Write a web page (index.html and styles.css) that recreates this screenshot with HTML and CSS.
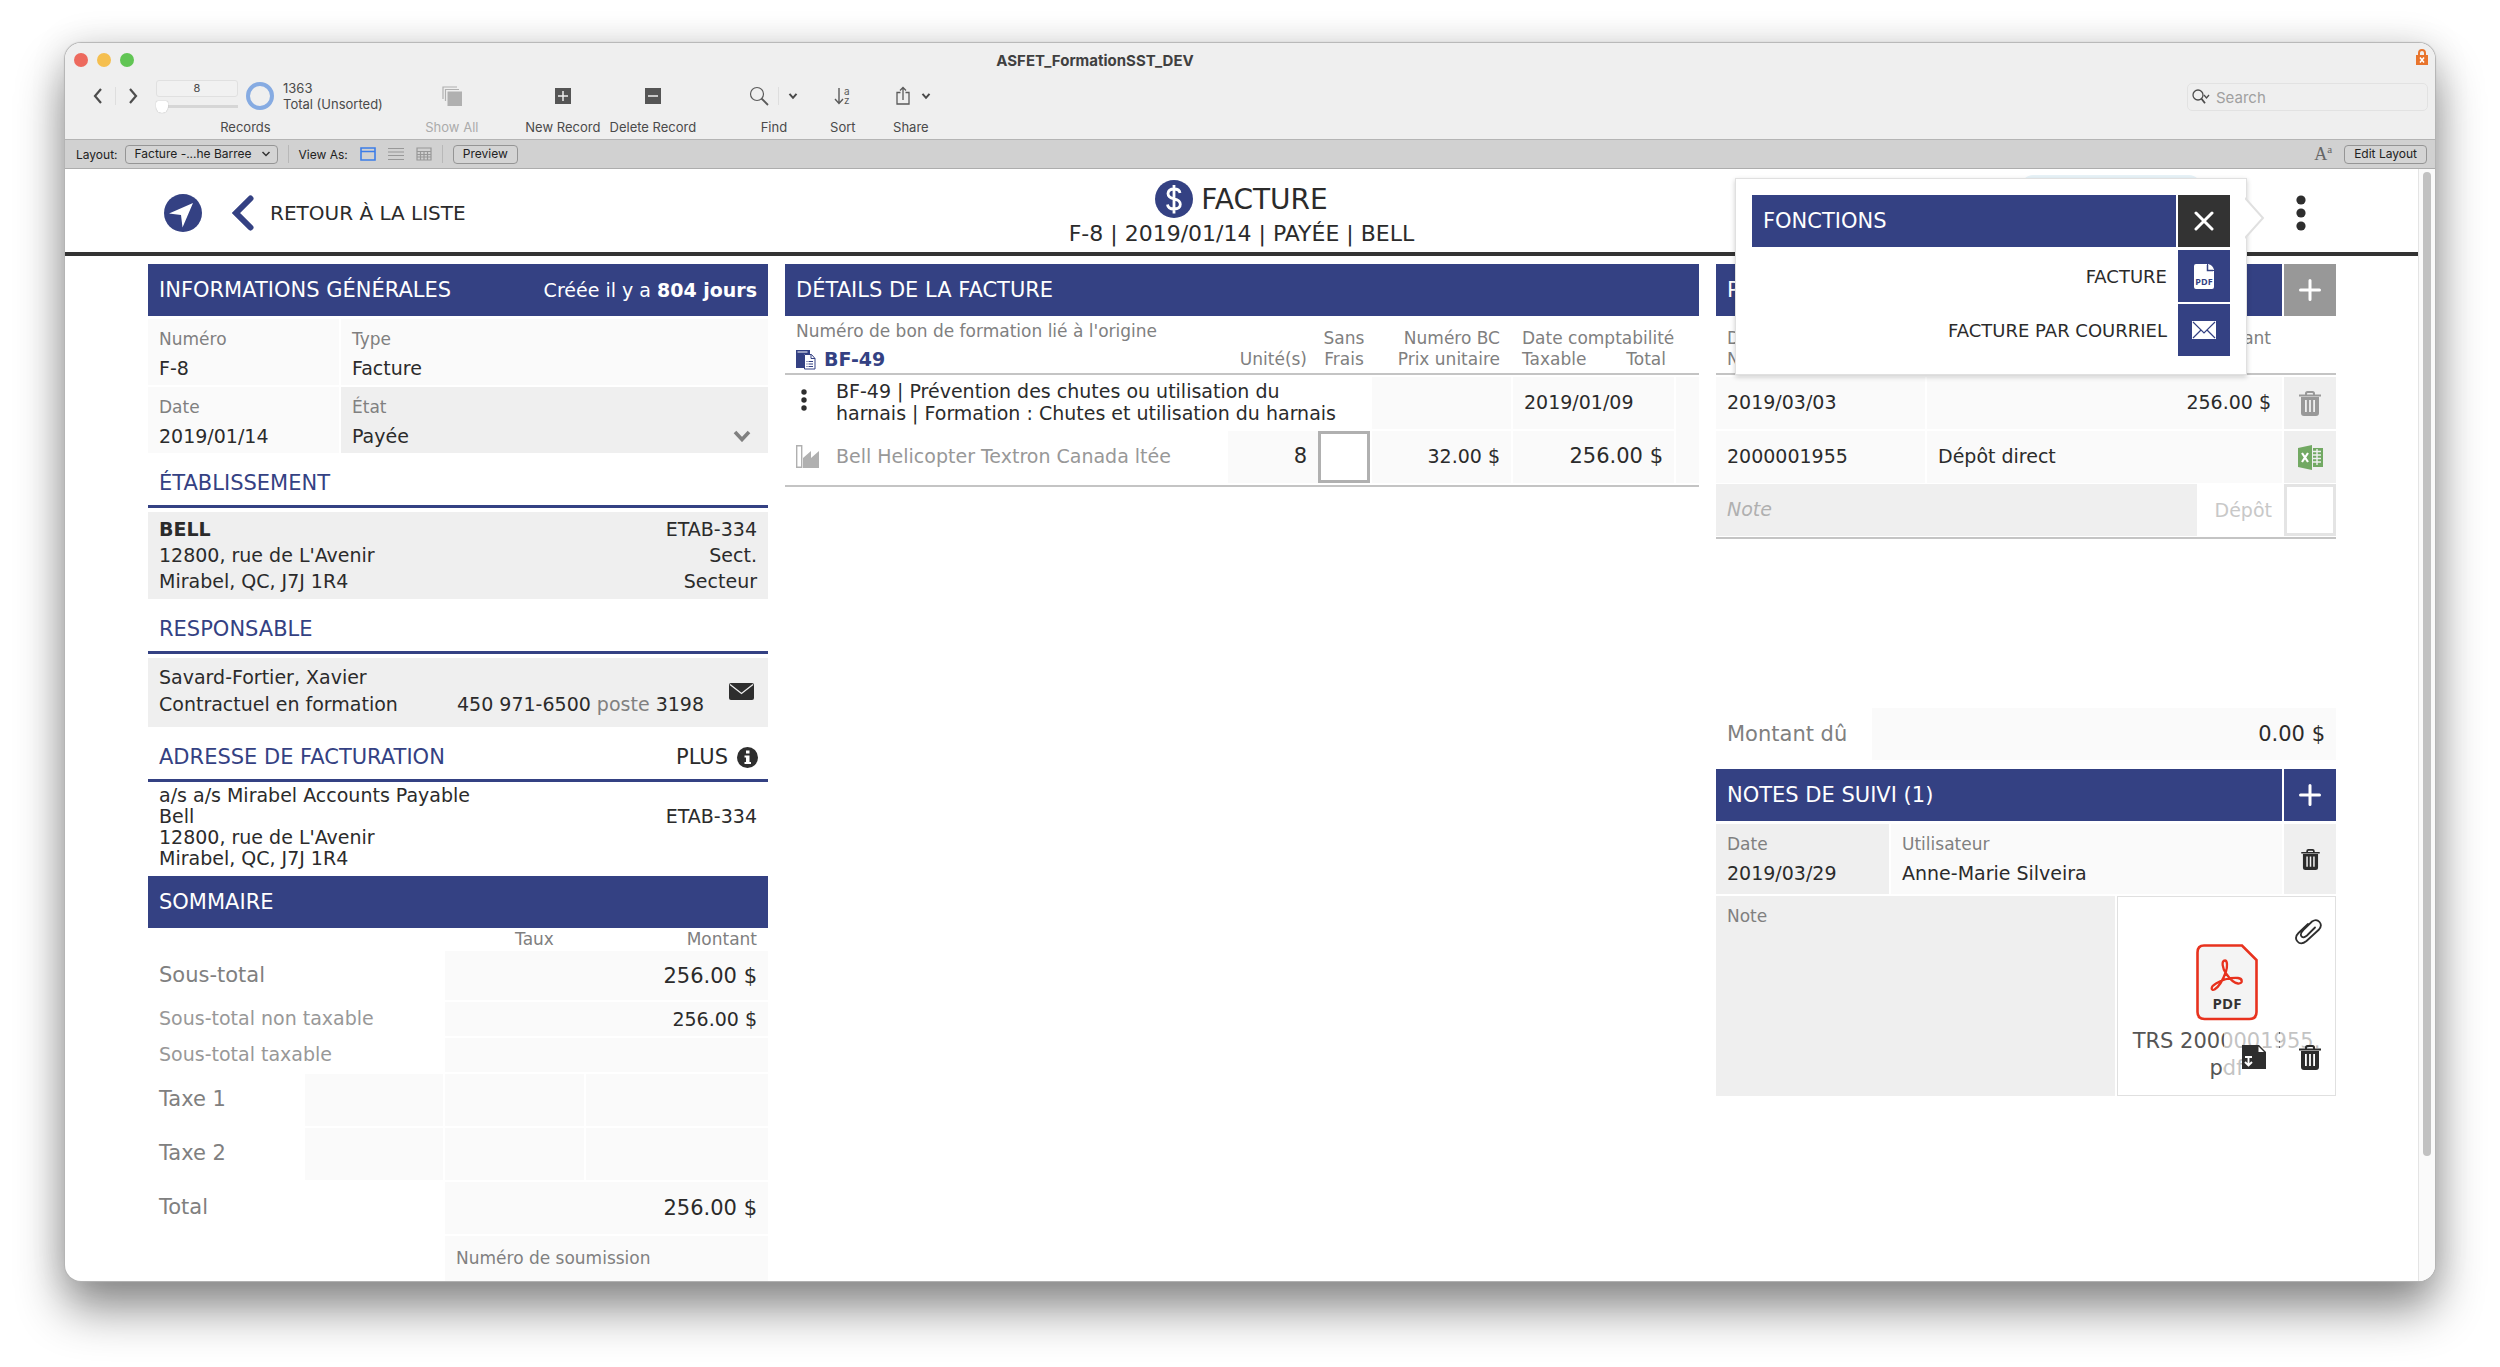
FILE: index.html
```html
<!DOCTYPE html>
<html lang="fr">

<head>
  <meta charset="utf-8">
  <meta name="viewport" content="width=device-width, initial-scale=1.0">
  <title>ASFET_FormationSST_DEV</title>
  <link rel="stylesheet" href="styles.css">
</head>

<body>
  <!-- shared icons -->
  <svg class="icon-defs" aria-hidden="true">
    <symbol id="icon-trash" viewBox="0 0 22 25">
      <path d="M0 3.500h22v2H0zM6 4V2.500Q6 0 8.500 0h5Q16 0 16 2.500V4h-2V2.800q0-.8-.8-.8H8.800Q8 2 8 2.800V4z" fill="currentColor"/>
      <path fill-rule="evenodd" d="M2 6h18v16q0 3-3 3H5q-3 0-3-3zM6 9v12h1.800V9zM10.100 9v12h1.800V9zM14.200 9v12H16V9z" fill="currentColor"/>
    </symbol>
    <symbol id="icon-plus" viewBox="0 0 22 22">
      <path d="M11 1.500v19M1.500 11h19" stroke="currentColor" stroke-width="3" stroke-linecap="round"/>
    </symbol>
    <symbol id="icon-down" viewBox="0 0 10 8">
      <path d="M1.500 1.800 5 5.800l3.500-4" fill="none" stroke="currentColor" stroke-width="2"/>
    </symbol>
  </svg>

  <div class="window">
    <div class="titlebar">
      <div class="lights">
        <span class="light red"></span>
        <span class="light yellow"></span>
        <span class="light green"></span>
      </div>
      <div class="window-title">ASFET_FormationSST_DEV</div>
      <svg class="lock" width="12" height="16" viewBox="0 0 12 16">
        <path d="M3 7V4q0-3 3-3t3 3v3" fill="none" stroke="#e8742c" stroke-width="2"/>
        <path d="M0 6h12v10H0z" fill="#e8742c"/>
        <path d="m4 8.500 4 5m0-5-4 5" stroke="#fff" stroke-width="1.500"/>
      </svg>
    </div>

    <div class="toolbar">
      <div class="tool records">
        <div class="tool-row">
          <button class="flat nav" aria-label="Previous record"><svg width="10" height="16" viewBox="0 0 10 16"><path d="M8 1 2 8l6 7" fill="none" stroke="#4d4d4d" stroke-width="2.200"/></svg></button>
          <span class="tool-sep"></span>
          <button class="flat nav" aria-label="Next record"><svg width="10" height="16" viewBox="0 0 10 16"><path d="m2 1 6 7-6 7" fill="none" stroke="#4d4d4d" stroke-width="2.200"/></svg></button>
          <div class="record-pick">
            <input class="record-number" type="text" value="8" aria-label="Record number">
            <input class="record-slider" type="range" min="1" max="1363" value="8" aria-label="Record slider">
          </div>
          <svg class="ring" width="28" height="28" viewBox="0 0 28 28"><circle cx="14" cy="14" r="12" fill="none" stroke="#86abe2" stroke-width="4"/></svg>
          <div class="record-count">1363<br>Total (Unsorted)</div>
        </div>
        <span class="tool-label">Records</span>
      </div>
      <button class="flat tool show-all" disabled>
        <span class="tool-row"><svg width="20" height="20" viewBox="0 0 20 20"><path d="M1 13V1h14M3.500 15V3.500H17" fill="none" stroke="#b0b0b0" stroke-width="1.200"/><path d="M5.500 5.500H20V20H5.500z" fill="#b0b0b0"/></svg></span>
        <span class="tool-label">Show All</span>
      </button>
      <button class="flat tool new-record">
        <span class="tool-row"><svg width="16" height="16" viewBox="0 0 16 16"><path d="M0 0h16v16H0z" fill="#555"/><path d="M8 3v10M3 8h10" stroke="#efefef" stroke-width="1.500"/></svg></span>
        <span class="tool-label">New Record</span>
      </button>
      <button class="flat tool delete-record">
        <span class="tool-row"><svg width="16" height="16" viewBox="0 0 16 16"><path d="M0 0h16v16H0z" fill="#555"/><path d="M3 8h10" stroke="#efefef" stroke-width="1.500"/></svg></span>
        <span class="tool-label">Delete Record</span>
      </button>
      <button class="flat tool find">
        <span class="tool-row">
          <svg width="20" height="20" viewBox="0 0 20 20"><circle cx="8" cy="8" r="6.500" fill="none" stroke="#5a5a5a" stroke-width="1.200"/><path d="m12.500 12.500 6.500 6.500" stroke="#5a5a5a" stroke-width="1.800"/></svg>
          <span class="tool-sep"></span>
          <svg class="caret" width="10" height="8"><use href="#icon-down"/></svg>
        </span>
        <span class="tool-label">Find</span>
      </button>
      <button class="flat tool sort">
        <span class="tool-row">
          <svg width="18" height="20" viewBox="0 0 18 20"><path d="M5 2v15M1 13l4 4.500L9 13" fill="none" stroke="#5a5a5a" stroke-width="1.400"/><text x="10" y="9" class="sort-letter">a</text><text x="10" y="18" class="sort-letter">z</text></svg>
        </span>
        <span class="tool-label">Sort</span>
      </button>
      <button class="flat tool share">
        <span class="tool-row">
          <svg width="14" height="20" viewBox="0 0 14 20"><path d="M4.500 6.500H1V18h12V6.500H9.500M7 14V1.500M4 4.500l3-3 3 3" fill="none" stroke="#5a5a5a" stroke-width="1.300"/></svg>
          <svg class="caret" width="10" height="8"><use href="#icon-down"/></svg>
        </span>
        <span class="tool-label">Share</span>
      </button>
      <label class="search">
        <svg width="18" height="16" viewBox="0 0 18 16"><circle cx="6" cy="6" r="5" fill="none" stroke="#4d4d4d" stroke-width="1.300"/><path d="m9.500 9.800 3.500 4.500" stroke="#4d4d4d" stroke-width="1.800"/><path d="m12 6 2.500 3L17 6" fill="none" stroke="#4d4d4d" stroke-width="1.300"/></svg>
        <input type="search" placeholder="Search" aria-label="Search">
      </label>
    </div>

    <div class="layoutbar">
      <label for="layout-select">Layout:</label>
      <select id="layout-select" class="bar-control layout-select">
        <option>Facture -...he Barree</option>
      </select>
      <span class="bar-sep"></span>
      <span>View As:</span>
      <button class="flat view" aria-label="Form view"><svg width="16" height="14" viewBox="0 0 16 14"><path d="M1 1h14v12H1zM1 4.500h14" fill="none" stroke="#3d7de8" stroke-width="1.600"/></svg></button>
      <button class="flat view" aria-label="List view"><svg width="16" height="14" viewBox="0 0 16 14"><path d="M0 1.500h16M0 5h16M0 8.500h16M0 12.500h16" stroke="#989898" stroke-width="1.200"/></svg></button>
      <button class="flat view" aria-label="Table view"><svg width="16" height="14" viewBox="0 0 16 14"><path d="M1 1h14v12H1zM1 4.500h14M1 7.500h14M1 10h14M4.500 4.500V13M8 4.500V13M11.500 4.500V13" fill="none" stroke="#989898" stroke-width="1.200"/></svg></button>
      <span class="bar-sep"></span>
      <button class="bar-control">Preview</button>
      <span class="format">A<sup>a</sup></span>
      <button class="bar-control">Edit Layout</button>
    </div>

    <div class="viewport">
      <div class="page">
        <header class="page-header">
          <div class="header-left">
            <button class="flat" aria-label="Navigation">
              <svg width="38" height="38" viewBox="0 0 38 38"><circle cx="19" cy="19" r="19" fill="#344183"/><path d="M29 9 18.500 33.500 17 21 5 19.500z" fill="#fff"/></svg>
            </button>
            <a class="back" href="#">
              <svg width="24" height="36" viewBox="0 0 24 36"><path d="M19.500 3.500 5 18l14.500 14.500" fill="none" stroke="#344183" stroke-width="6" stroke-linecap="round"/></svg>
              RETOUR À LA LISTE
            </a>
          </div>
          <div class="header-title">
            <h1>
              <svg width="38" height="38" viewBox="0 0 38 38"><circle cx="19" cy="19" r="19" fill="#344183"/><path d="M25 13q-.5-4-6-4t-6 4.500q0 4 6 5.300 6.300 1.300 6.300 5.500 0 4.700-6.300 4.700-6 0-6.500-4.500M19 5v28.500" fill="none" stroke="#fff" stroke-width="2.800"/></svg>
              FACTURE
            </h1>
            <p>F-8 | 2019/01/14 | PAYÉE | BELL</p>
          </div>
          <div class="header-menu">
            <span class="halo"></span>
            <button class="flat dots" aria-label="Fonctions">
              <svg width="10" height="36" viewBox="0 0 10 36"><circle cx="5" cy="5" r="4.600" fill="#2e2e2e"/><circle cx="5" cy="18" r="4.600" fill="#2e2e2e"/><circle cx="5" cy="31" r="4.600" fill="#2e2e2e"/></svg>
            </button>
            <div class="popover">
              <svg class="pointer" width="20" height="42" viewBox="0 0 20 42"><path d="M0 1 18 21 0 41" fill="#fff" stroke="#e0e0e0" stroke-width="2"/></svg>
              <div class="popover-head">
                <h2 class="bar">FONCTIONS</h2>
                <button class="square dark" aria-label="Fermer"><svg width="20" height="20" viewBox="0 0 20 20"><path d="m2 2 16 16m0-16L2 18" stroke="#fff" stroke-width="3" stroke-linecap="round"/></svg></button>
              </div>
              <div class="popover-row">
                <label for="fn-pdf">FACTURE</label>
                <button id="fn-pdf" class="square"><svg width="20" height="25" viewBox="0 0 20 25"><path d="M2 0h11v7h7v16q0 2-2 2H2q-2 0-2-2V2q0-2 2-2z" fill="#fff"/><path d="M14 0q5 1 6 6h-6z" fill="#fff"/><path d="M13.500 1v5.500H19" fill="none" stroke="#344183" stroke-width="1.500"/><text x="10" y="21" class="pdf-small">PDF</text></svg></button>
              </div>
              <div class="popover-row">
                <label for="fn-mail">FACTURE PAR COURRIEL</label>
                <button id="fn-mail" class="square"><svg width="24" height="18" viewBox="0 0 24 18"><path d="M0 0h24v18H0z" fill="#fff"/><path d="m1 1 11 11L23 1M1 17l8-8M23 17l-8-8" fill="none" stroke="#344183" stroke-width="1.200"/></svg></button>
              </div>
            </div>
          </div>
        </header>

        <main class="columns">
          <section class="col-info">
            <div class="bar">
              <h2>INFORMATIONS GÉNÉRALES</h2>
              <span>Créée il y a <b>804 jours</b></span>
            </div>
            <div class="fields info-fields">
              <div class="field"><span class="label">Numéro</span><span>F-8</span></div>
              <div class="field"><span class="label">Type</span><span>Facture</span></div>
              <div class="field"><span class="label">Date</span><span>2019/01/14</span></div>
              <div class="field editable">
                <label class="label" for="etat">État</label>
                <select id="etat" class="etat"><option>Payée</option></select>
                <svg class="etat-arrow" width="18" height="12" viewBox="0 0 18 12"><path d="m2 2 7 7.500L16 2" fill="none" stroke="#808080" stroke-width="3.600"/></svg>
              </div>
            </div>

            <h3 class="section-title">ÉTABLISSEMENT</h3>
            <div class="box company">
              <div><b>BELL</b><br>12800, rue de L'Avenir<br>Mirabel, QC, J7J 1R4</div>
              <div class="right">ETAB-334<br>Sect.<br>Secteur</div>
            </div>

            <h3 class="section-title">RESPONSABLE</h3>
            <div class="box contact">
              <div>Savard-Fortier, Xavier<br>Contractuel en formation</div>
              <div class="phone">450 971-6500 <span class="label-text">poste</span> 3198</div>
              <button class="flat" aria-label="Courriel"><svg width="25" height="17" viewBox="0 0 25 17"><rect width="25" height="17" rx="2" fill="#2e2e2e"/><path d="m1 1.500 11.500 9L24 1.500" fill="none" stroke="#efefef" stroke-width="1.300"/></svg></button>
            </div>

            <div class="section-title">
              <h3>ADRESSE DE FACTURATION</h3>
              <button class="flat plus-info">PLUS
                <svg width="21" height="21" viewBox="0 0 21 21"><circle cx="10.500" cy="10.500" r="10.500" fill="#2e2e2e"/><path d="M9 3.500h3.500v3H9zM7.500 8.500h5V15H14v2H7.500v-2H9v-4.500H7.500z" fill="#fff"/></svg>
              </button>
            </div>
            <div class="address">
              <div>a/s a/s Mirabel Accounts Payable<br>Bell<br>12800, rue de L'Avenir<br>Mirabel, QC, J7J 1R4</div>
              <div class="right"><br>ETAB-334</div>
            </div>

            <div class="bar"><h2>SOMMAIRE</h2></div>
            <table class="summary">
              <thead>
                <tr><th class="c-label"></th><th class="c-tax"></th><th class="c-rate">Taux</th><th class="right">Montant</th></tr>
              </thead>
              <tbody>
                <tr><th colspan="2" class="large">Sous-total</th><td colspan="2" class="large">256.00 $</td></tr>
                <tr class="small"><th colspan="2">Sous-total non taxable</th><td colspan="2">256.00 $</td></tr>
                <tr class="small"><th colspan="2">Sous-total taxable</th><td colspan="2"></td></tr>
                <tr class="tall"><th class="large">Taxe 1</th><td></td><td></td><td></td></tr>
                <tr class="tall"><th class="large">Taxe 2</th><td></td><td></td><td></td></tr>
                <tr class="tall"><th colspan="2" class="large">Total</th><td colspan="2" class="large">256.00 $</td></tr>
                <tr class="tall"><th colspan="2"></th><td colspan="2" class="quote">Numéro de soumission</td></tr>
              </tbody>
            </table>
          </section>

          <section class="col-details">
            <div class="bar"><h2>DÉTAILS DE LA FACTURE</h2></div>
            <table class="portal details">
              <colgroup>
                <col class="c-icon">
                <col>
                <col class="c-units">
                <col class="c-free">
                <col class="c-price">
                <col class="c-total">
                <col class="c-end">
              </colgroup>
              <thead>
                <tr>
                  <th colspan="2" class="origin">
                    Numéro de bon de formation lié à l'origine
                    <a href="#">
                      <svg width="20" height="20" viewBox="0 0 20 20"><path d="M0 0h14v4H8v14H0z" fill="#344183"/><path d="M1.500 2h10" stroke="#fff"/><path d="M8.500 4.500h7l3.500 4v10.500H8.500zM15 4.500v4h4" fill="#fff" stroke="#344183"/><path d="M10.500 11.500h1m1 0h4.500m-6.500 2.500h1m1 0h4.500m-6.500 2.500h1m1 0h4.500" stroke="#344183"/></svg>
                      BF-49
                    </a>
                  </th>
                  <th class="right">Unité(s)</th>
                  <th class="free center">Sans<br>Frais</th>
                  <th class="right">Numéro BC<br>Prix unitaire</th>
                  <th colspan="2">Date comptabilité<br><span class="split"><span>Taxable</span><span>Total</span></span></th>
                </tr>
              </thead>
              <tbody>
                <tr>
                  <td class="icon-cell"><button class="flat options" aria-label="Options"><svg width="6" height="22" viewBox="0 0 6 22"><circle cx="3" cy="3" r="2.700" fill="#2e2e2e"/><circle cx="3" cy="11" r="2.700" fill="#2e2e2e"/><circle cx="3" cy="19" r="2.700" fill="#2e2e2e"/></svg></button></td>
                  <td colspan="3" class="description">BF-49 | Prévention des chutes ou utilisation du<br>harnais | Formation : Chutes et utilisation du harnais</td>
                  <td class="fill"></td>
                  <td class="fill">2019/01/09</td>
                  <td class="fill" rowspan="2"></td>
                </tr>
                <tr>
                  <td class="icon-cell"><svg width="23" height="23" viewBox="0 0 23 23"><path d="M.7.700h5v21.500h-5z" fill="none" stroke="#b0b0b0" stroke-width="1.400"/><path d="M7 23V13l8-7v7l8-7v17z" fill="#b0b0b0"/></svg></td>
                  <td class="client">Bell Helicopter Textron Canada ltée</td>
                  <td class="fill right large">8</td>
                  <td class="check-cell"><input type="checkbox" class="check" aria-label="Sans frais"></td>
                  <td class="fill right">32.00 $</td>
                  <td class="fill right large">256.00 $</td>
                </tr>
              </tbody>
            </table>
          </section>

          <section class="col-payments">
            <div class="bar-row">
              <h2 class="bar">PAIEMENTS</h2>
              <button class="square grey" aria-label="Ajouter un paiement"><svg width="22" height="22"><use href="#icon-plus"/></svg></button>
            </div>
            <div class="payments">
              <table class="portal">
                <thead>
                  <tr><th class="c-pay-date">Date<br>Numéro</th><th class="right">Montant<br>&nbsp;</th><th class="c-action"></th></tr>
                </thead>
                <tbody>
                  <tr>
                    <td class="fill">2019/03/03</td>
                    <td class="fill right">256.00 $</td>
                    <td class="action"><button class="flat muted" aria-label="Supprimer le paiement"><svg width="22" height="25"><use href="#icon-trash"/></svg></button></td>
                  </tr>
                  <tr>
                    <td class="fill">2000001955</td>
                    <td class="fill">Dépôt direct</td>
                    <td class="action"><button class="flat" aria-label="Exporter vers Excel"><svg width="25" height="25" viewBox="0 0 25 25"><path d="m0 3 14-3v25L0 22z" fill="#72a963"/><path d="M15 3h10v19H15z" fill="#72a963"/><path d="M15 6.500h8M15 10h8m-8 3.500h8M15 17h8M19 4v16" stroke="#efefef" stroke-width="1.400"/><path d="m4 8 6 9m0-9-6 9" stroke="#fff" stroke-width="2.200"/></svg></button></td>
                  </tr>
                </tbody>
              </table>
              <div class="deposit">
                <input class="note-input" type="text" placeholder="Note" aria-label="Note">
                <label for="depot">Dépôt</label>
                <input id="depot" type="checkbox" class="check light-check">
              </div>
            </div>
            <div class="due">
              <span>Montant dû</span>
              <output>0.00 $</output>
            </div>

            <div class="bar-row">
              <h2 class="bar">NOTES DE SUIVI (1)</h2>
              <button class="square" aria-label="Ajouter une note"><svg width="22" height="22"><use href="#icon-plus"/></svg></button>
            </div>
            <div class="fields note-fields">
              <div class="field editable"><label class="label" for="note-date">Date</label><input id="note-date" type="text" value="2019/03/29"></div>
              <div class="field"><span class="label">Utilisateur</span><span>Anne-Marie Silveira</span></div>
              <div class="action"><button class="flat" aria-label="Supprimer la note"><svg width="19" height="21"><use href="#icon-trash"/></svg></button></div>
            </div>
            <div class="note-body">
              <div class="field editable"><label class="label" for="note-text">Note</label><textarea id="note-text"></textarea></div>
              <div class="attachment">
                <svg class="pdf-icon" width="62" height="77" viewBox="0 0 62 77">
                  <path d="M8 1.500h38L60.500 16v52q0 7-7 7H8.500q-7 0-7-7V8.500q0-7 6.500-7z" fill="#f4f4f4" stroke="#e8321e" stroke-width="2.600"/>
                  <path d="M29 16.500c-4 0-2.500 8 1 13s7 9.500 12 10 5-5 0-5.500c-8-.5-17 2.500-22 5.500-6 3.500-5 7.500-1.500 6 5-3 9-11 11.500-18 1.500-5 1.500-11-1-11z" fill="none" stroke="#e8321e" stroke-width="2.300"/>
                  <text x="31" y="65" class="pdf-text">PDF</text>
                </svg>
                <span class="file-name">TRS 2000001955.<wbr>pdf</span>
                <button class="flat clip" aria-label="Joindre un fichier"><svg width="28" height="26" viewBox="0 0 28 26"><path d="M14 5 4.500 14Q0 18.500 3.500 22.500t9-.5L25 10.500Q28.500 6.500 25.500 3T18 2.500L9.500 10.800Q5.500 15 7.500 17.300t5.500-.8L21 8.500" fill="none" stroke="#2e2e2e" stroke-width="1.800" stroke-linecap="round"/></svg></button>
                <div class="file-actions">
                  <button class="flat" aria-label="Télécharger"><svg width="24" height="24" viewBox="0 0 24 24"><path d="M0 0h17l7 7v17H0z" fill="#2e2e2e"/><path d="M16.500 1.500V7H22z" fill="#fff"/><path d="M3 12h7M6.500 12v8M3 17l3.500 3.500L10 17" fill="none" stroke="#fff" stroke-width="1.900"/></svg></button>
                  <button class="flat" aria-label="Supprimer le fichier"><svg width="22" height="25"><use href="#icon-trash"/></svg></button>
                </div>
              </div>
            </div>
          </section>
        </main>
      </div>
      <div class="scrollbar"><div class="thumb"></div></div>
    </div>
  </div>
</body>

</html>
```
FILE: styles.css
```css
* {
  box-sizing: border-box;
}

body {
  margin: 0;
  height: 100vh;
  padding: 43px 65px 86px;
  background-color: white;
  font-family: Verdana, "DejaVu Sans", sans-serif;
  font-size: 19px;
  color: #2b2b2b;
  overflow: hidden;
}

h1, h2, h3, p {
  margin: 0;
  font-weight: normal;
}

svg {
  display: block;
  flex: none;
}

input, select, textarea, button {
  font: inherit;
  color: inherit;
}

.icon-defs {
  position: absolute;
  width: 0;
  height: 0;
}

.flat {
  border: none;
  background: none;
  padding: 0;
  cursor: pointer;
}

.right {
  text-align: right;
}

.center {
  text-align: center;
}

/* window */

.window {
  height: 100%;
  display: flex;
  flex-direction: column;
  border-radius: 16px;
  overflow: hidden;
  background-color: white;
  box-shadow: 0 0 1px 1px #b4b4b4, 0 28px 48px rgba(0, 0, 0, 0.45), 0 0 36px rgba(0, 0, 0, 0.12);
}

.titlebar {
  display: flex;
  align-items: center;
  height: 34px;
  padding: 0 7px 0 9px;
  background-color: #efefef;
  font-family: Inter, sans-serif;
}

.lights {
  display: flex;
  gap: 9px;
}

.light {
  width: 14px;
  height: 14px;
  border-radius: 50%;
}

.red {
  background-color: #ed6a5e;
}

.yellow {
  background-color: #f5bf4f;
}

.green {
  background-color: #61c554;
}

.window-title {
  flex: 1;
  padding-right: 360px;
  text-align: center;
  font-size: 15px;
  font-weight: bold;
  color: #404040;
}

.lock {
  margin-bottom: 6px;
}

.toolbar {
  display: flex;
  height: 63px;
  padding: 0 7px 0 25px;
  background-color: #efefef;
  border-bottom: 1px solid #b4b4b4;
  font-family: Inter, sans-serif;
  font-size: 13px;
  color: #4a4a4a;
}

.tool {
  display: flex;
  flex-direction: column;
  align-items: center;
}

.tool-row {
  display: flex;
  align-items: center;
  height: 39px;
}

.tool-label {
  line-height: 24px;
  white-space: nowrap;
}

.records .tool-label {
  padding-left: 18px;
}

.nav {
  padding: 0 3px;
}

.tool-sep {
  width: 1px;
  height: 18px;
  margin: 0 9px;
  background-color: #dedede;
}

.record-pick {
  display: flex;
  flex-direction: column;
  gap: 4px;
  width: 82px;
  margin: 0 8px 0 15px;
}

.record-number {
  width: 100%;
  height: 17px;
  padding: 0;
  border: 1px solid #e0e0e0;
  border-radius: 3px;
  background: #f1f1f1;
  text-align: center;
  font-size: 11px;
}

.record-slider {
  appearance: none;
  width: 100%;
  height: 12px;
  margin: 0;
  background: linear-gradient(#d6d6d6, #d6d6d6) center / 100% 3px no-repeat;
}

.record-slider::-webkit-slider-thumb {
  appearance: none;
  width: 12px;
  height: 12px;
  border-radius: 2px 2px 6px 6px;
  background-color: white;
  box-shadow: 0 0 1px #999;
}

.record-count {
  margin-left: 9px;
  line-height: 16px;
  white-space: nowrap;
}

.show-all {
  width: 54px;
  margin-left: 42px;
  color: #ababab;
}

.new-record {
  width: 76px;
  margin-left: 46px;
}

.delete-record {
  width: 88px;
  margin-left: 8px;
}

.find {
  width: 50px;
  margin-left: 52px;
}

.sort {
  width: 30px;
  margin-left: 29px;
}

.share {
  width: 40px;
  margin-left: 33px;
}

.share .tool-row {
  gap: 11px;
  padding-left: 6px;
}

.sort-letter {
  font-family: Inter, sans-serif;
  font-size: 10px;
  fill: #5a5a5a;
}

.search {
  display: flex;
  align-items: center;
  gap: 6px;
  width: 241px;
  height: 28px;
  margin: 6px 0 0 auto;
  padding: 0 4px;
  border: 1px solid #e2e2e2;
  border-radius: 5px;
}

.search input {
  flex: 1;
  min-width: 0;
  border: none;
  background: none;
  padding: 0;
  font-size: 15px;
}

.search input::placeholder {
  color: #a0a0a0;
}

.layoutbar {
  display: flex;
  align-items: center;
  height: 29px;
  padding: 0 8px 0 11px;
  background-color: #d1d1d1;
  border-bottom: 1px solid #adadad;
  font-family: Inter, sans-serif;
  font-size: 12px;
  color: #222;
}

.bar-control {
  height: 19px;
  padding: 0 9px;
  border: 1px solid #959595;
  border-radius: 4px;
  background-color: #d4d4d4;
  line-height: 16px;
}

.layout-select {
  appearance: none;
  width: 153px;
  margin-left: 7px;
  background: #d4d4d4 url("data:image/svg+xml,%3Csvg xmlns='http://www.w3.org/2000/svg' width='10' height='8'%3E%3Cpath d='M1.500 2 5 5.500 8.500 2' fill='none' stroke='%23333' stroke-width='1.500'/%3E%3C/svg%3E") no-repeat right 6px center;
}

.bar-sep {
  width: 1px;
  height: 18px;
  margin: 0 10px;
  background-color: #b8b8b8;
}

.view {
  margin-left: 12px;
}

.format {
  margin: 0 12px 0 auto;
  font-family: "Liberation Serif", serif;
  font-size: 18px;
  color: #666;
}

.format sup {
  font-size: 11px;
  line-height: 0;
}

/* page */

.viewport {
  flex: 1;
  min-height: 0;
  display: flex;
}

.page {
  flex: 1;
  min-width: 0;
  overflow: hidden;
}

.scrollbar {
  width: 17px;
  padding: 3px 4px;
  border-left: 1px solid #e4e4e4;
  background-color: #fafafa;
}

.thumb {
  height: 89%;
  border-radius: 4px;
  background-color: #c1c1c1;
}

.page-header {
  display: grid;
  grid-template-columns: 1fr auto 1fr;
  height: 87px;
  padding: 0 99px;
  border-bottom: 4px solid #333;
  font-size: 20px;
}

.header-left {
  display: flex;
  align-items: center;
  gap: 29px;
  padding-top: 4px;
}

.back {
  display: flex;
  align-items: center;
  gap: 15px;
  color: inherit;
  text-decoration: none;
}

.header-title {
  padding-top: 10px;
  text-align: center;
}

.header-title h1 {
  display: flex;
  align-items: center;
  justify-content: center;
  gap: 8px;
  height: 40px;
  font-size: 28px;
}

.header-title p {
  font-size: 22px;
  line-height: 30px;
}

.header-menu {
  position: relative;
  display: flex;
  align-items: center;
  justify-content: flex-end;
  padding: 4px 13px 0 0;
}

.halo {
  position: absolute;
  top: 6px;
  right: 118px;
  width: 180px;
  height: 24px;
  border-radius: 24px;
  background-color: #e8f3f8;
}

.popover {
  position: absolute;
  z-index: 2;
  top: 9px;
  right: 72px;
  width: 512px;
  padding: 16px;
  background-color: white;
  border: 1px solid #e0e0e0;
  box-shadow: 0 2px 5px rgba(0, 0, 0, 0.2);
}

.pointer {
  position: absolute;
  top: 18px;
  right: -19px;
}

.popover-head,
.bar-row {
  display: flex;
  gap: 2px;
}

.popover-head {
  margin-bottom: 3px;
}

.popover-head .bar,
.bar-row .bar {
  flex: 1;
}

.popover-row {
  display: flex;
  align-items: center;
  justify-content: flex-end;
  gap: 11px;
  margin-bottom: 2px;
  font-size: 18px;
}

.bar {
  display: flex;
  align-items: center;
  justify-content: space-between;
  height: 52px;
  padding: 0 11px;
  background-color: #344183;
  color: white;
  font-size: 21px;
}

.bar h2 {
  font-size: 21px;
}

.bar span {
  font-size: 19px;
}

.square {
  display: flex;
  align-items: center;
  justify-content: center;
  width: 52px;
  height: 52px;
  padding: 0;
  border: none;
  background-color: #344183;
  color: white;
}

.dark {
  background-color: #333;
}

.grey {
  background-color: #989898;
}

.pdf-small {
  font-family: "Open Sans", sans-serif;
  font-size: 9px;
  font-weight: bold;
  text-anchor: middle;
  fill: #344183;
}

.columns {
  display: grid;
  grid-template-columns: 620fr 914fr 620fr;
  gap: 17px;
  padding: 8px 82px 0 83px;
}

.fields {
  display: grid;
  gap: 2px;
  margin-top: 3px;
}

.info-fields {
  grid-template-columns: 191px 1fr;
}

.field {
  position: relative;
  display: flex;
  flex-direction: column;
  gap: 5px;
  height: 66px;
  padding: 8px 11px 0;
  background-color: #fafafa;
  line-height: 24px;
}

.editable {
  background-color: #efefef;
}

.label {
  font-size: 17px;
  color: #808080;
}

.label-text {
  color: #808080;
}

.field input,
.field textarea,
.etat {
  width: 100%;
  height: 24px;
  padding: 0;
  border: none;
  background: none;
  appearance: none;
  resize: none;
}

.etat-arrow {
  position: absolute;
  right: 17px;
  bottom: 11px;
}

.section-title {
  display: flex;
  align-items: center;
  justify-content: space-between;
  height: 55px;
  padding: 8px 10px 0 11px;
  border-bottom: 3px solid #344183;
  font-size: 21px;
  color: #344183;
}

.section-title h3 {
  font-size: 21px;
}

.plus-info {
  display: flex;
  align-items: center;
  gap: 9px;
  color: #2b2b2b;
}

.box {
  display: flex;
  justify-content: space-between;
  margin-top: 4px;
  background-color: #efefef;
}

.company {
  padding: 4px 11px 5px;
  line-height: 26px;
}

.contact {
  align-items: center;
  padding: 6px 14px 9px 11px;
  line-height: 27px;
}

.phone {
  align-self: flex-end;
  margin: 0 25px 0 auto;
}

.address {
  display: flex;
  justify-content: space-between;
  padding: 3px 11px 7px;
  line-height: 21px;
}

/* tables */

table {
  width: 100%;
  table-layout: fixed;
  border-spacing: 0;
}

th {
  padding: 0 11px;
  text-align: left;
  font-weight: normal;
  color: #808080;
}

td {
  padding: 0 11px;
}

.large {
  font-size: 21px;
}

th.right {
  text-align: right;
}

th.center {
  text-align: center;
}

.summary thead th {
  height: 21px;
  font-size: 17px;
  line-height: 20px;
}

.summary .c-label {
  width: 155px;
}

.summary .c-tax {
  width: 140px;
}

.summary .c-rate {
  width: 141px;
  padding: 0 0 0 42px;
  text-align: center;
}

.summary tbody tr {
  height: 51px;
}

.summary tbody .small {
  height: 36px;
}

.summary tbody .tall {
  height: 54px;
}

.summary .small th {
  color: #989898;
}

.summary td {
  border-top: 2px solid white;
  border-left: 2px solid white;
  background-color: #fafafa;
  text-align: right;
}

.summary .quote {
  padding-top: 12px;
  vertical-align: top;
  text-align: left;
  font-size: 17px;
  color: #808080;
}

.portal thead th {
  height: 59px;
  padding-bottom: 3px;
  border-bottom: 2px solid #c4c4c4;
  vertical-align: bottom;
  font-size: 17px;
  line-height: 21px;
  white-space: nowrap;
}

.portal td {
  height: 54px;
  padding-bottom: 2px;
  border-left: 2px solid white;
  border-top: 2px solid white;
}

.portal td:first-child {
  border-left: none;
}

.fill {
  background-color: #fafafa;
}

.details {
  padding-bottom: 2px;
  border-bottom: 2px solid #c4c4c4;
}

.c-icon {
  width: 38px;
}

.c-units {
  width: 92px;
}

.c-free {
  width: 52px;
}

.c-price {
  width: 141px;
}

.c-total {
  width: 163px;
}

.c-end {
  width: 25px;
}

.origin a {
  display: flex;
  align-items: center;
  gap: 8px;
  margin-top: 7px;
  color: #344183;
  font-size: 19px;
  font-weight: bold;
  text-decoration: none;
}

.details .free {
  padding: 0 0 3px;
}

.split {
  display: flex;
  justify-content: space-between;
  padding-right: 22px;
}

.details .icon-cell {
  padding-right: 0;
}

.options {
  padding: 0 5px;
}

.description {
  line-height: 22px;
}

.description,
.client {
  white-space: nowrap;
}

.client {
  color: #989898;
}

.details .check-cell {
  padding: 0;
  border-left: none;
}

.check {
  display: block;
  appearance: none;
  width: 52px;
  height: 52px;
  margin: 0;
  border: 3px solid #b0b0b0;
  background-color: white;
}

.light-check {
  border-color: #e4e4e4;
}

.payments {
  min-height: 392px;
}

.c-pay-date {
  width: 209px;
}

.c-action {
  width: 54px;
}

.portal .action {
  padding: 0;
}

.action {
  background-color: #efefef;
}

.action .flat {
  display: flex;
  justify-content: center;
  align-items: center;
  width: 100%;
  height: 100%;
}

.muted {
  color: #989898;
}

.deposit {
  display: flex;
  align-items: center;
  height: 56px;
  border-bottom: 2px solid #c4c4c4;
  color: #c8c8c8;
}

.note-input {
  flex: 1;
  min-width: 0;
  height: 52px;
  padding: 0 11px 2px;
  border: none;
  background-color: #efefef;
}

.note-input::placeholder {
  font-style: italic;
  color: #b0b0b0;
}

.deposit label {
  padding: 0 12px 0 18px;
}

.due {
  display: flex;
  align-items: center;
  height: 52px;
  margin-bottom: 9px;
  padding-left: 11px;
  font-size: 21px;
  color: #808080;
}

.due span {
  flex: none;
  width: 145px;
}

.due output {
  flex: 1;
  padding-right: 11px;
  background-color: #fafafa;
  line-height: 52px;
  text-align: right;
  color: #2b2b2b;
}

.note-fields {
  grid-template-columns: 173px 1fr 52px;
}

.note-fields .field {
  height: 70px;
}

.note-body {
  display: grid;
  grid-template-columns: 1fr 219px;
  gap: 2px;
  margin-top: 2px;
}

.note-body .field {
  height: 200px;
}

.field textarea {
  flex: 1;
}

.attachment {
  position: relative;
  padding: 47px 12px 0;
  border: 1px solid #e0e0e0;
  text-align: center;
}

.pdf-icon {
  margin: 0 auto 7px;
}

.pdf-text {
  font-family: "Open Sans", sans-serif;
  font-size: 15px;
  font-weight: bold;
  text-anchor: middle;
  fill: #333;
}

.file-name {
  font-size: 21px;
  line-height: 27px;
  color: #555;
}

.clip {
  position: absolute;
  top: 22px;
  right: 13px;
}

/* translucent buttons lying over the file name */
.file-actions {
  position: absolute;
  right: 0;
  bottom: 10px;
  display: flex;
  gap: 1px;
}

.file-actions .flat {
  display: flex;
  align-items: center;
  justify-content: center;
  width: 55px;
  height: 56px;
  padding-left: 4px;
  background-color: rgba(255, 255, 255, 0.65);
}
```
